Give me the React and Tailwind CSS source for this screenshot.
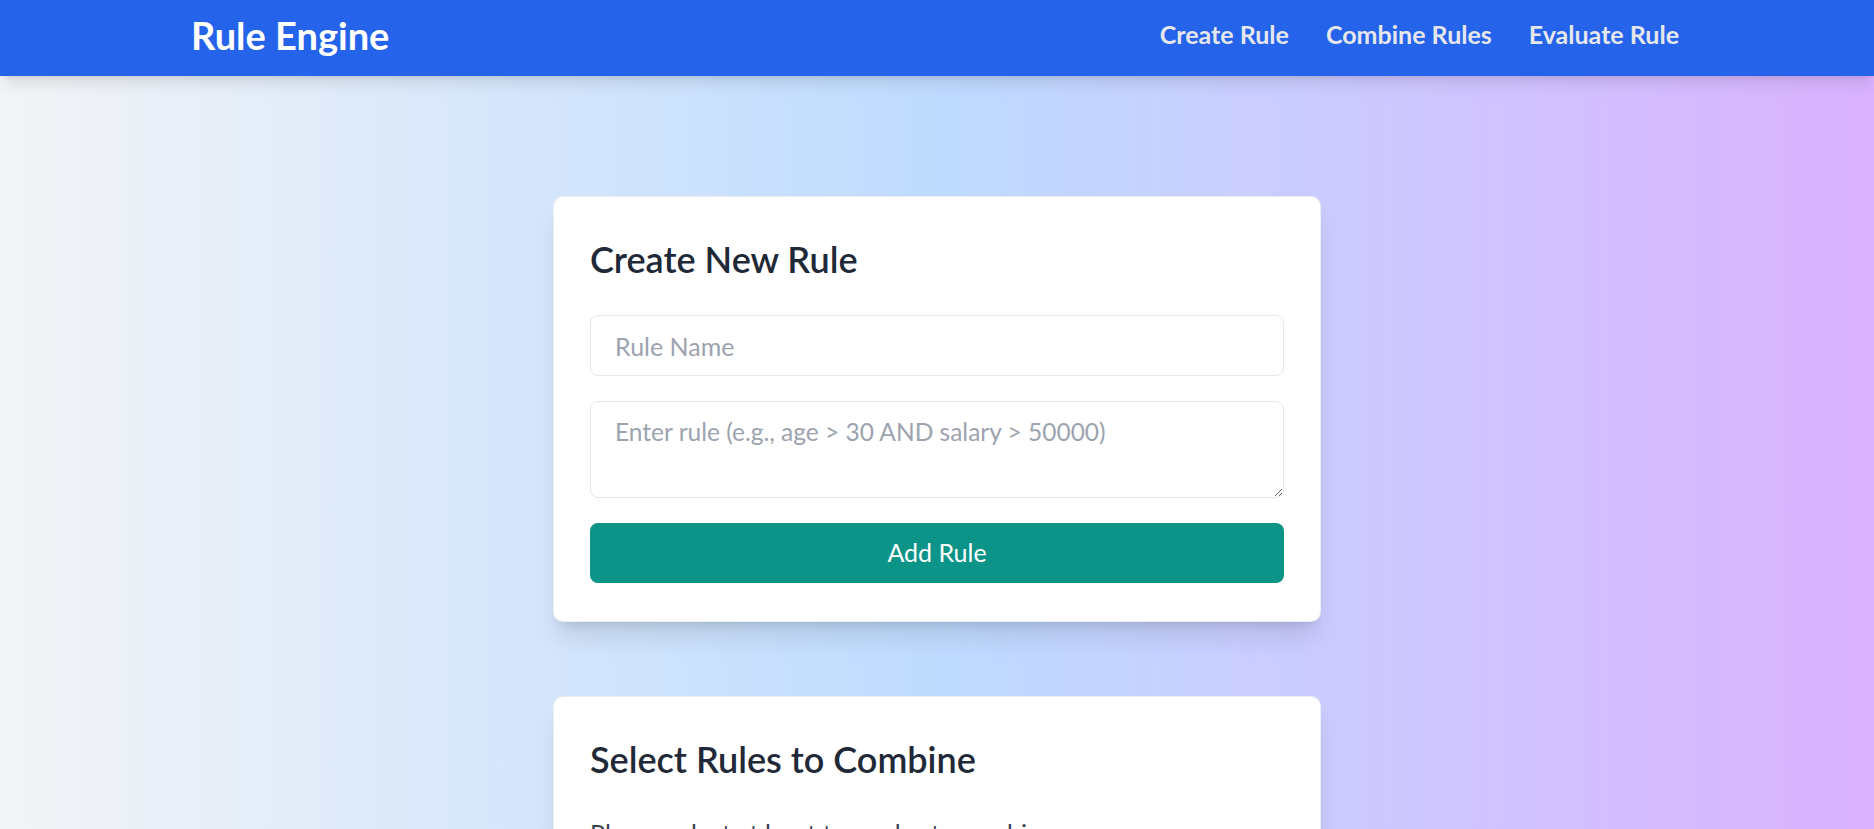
import React from "react";

export default function App() {
  return (
    <div
      className="min-h-screen bg-gradient-to-r from-gray-100 via-blue-200 to-purple-300"
      style={{ fontFamily: "Lato, 'Open Sans', sans-serif" }}
    >
      <header className="bg-[#2563eb] shadow-lg relative z-10">
        <div className="mx-auto max-w-[1536px] pl-[22px] pr-6 h-[76px] pb-[6px] flex items-center justify-between">
          <h1 className="text-white font-bold text-[38px] leading-none">Rule Engine</h1>
          <nav className="flex items-center gap-[37px] pr-[2px] -mt-[2px]">
            <a className="text-[#e5e7eb] font-bold text-[25px] leading-none">Create Rule</a>
            <a className="text-[#e5e7eb] font-bold text-[25px] leading-none">Combine Rules</a>
            <a className="text-[#e5e7eb] font-bold text-[25px] leading-none">Evaluate Rule</a>
          </nav>
        </div>
      </header>

      <main className="flex flex-col items-center pt-[120px] pb-[80px] gap-[74px]">
        <section className="w-[768px] bg-white rounded-[10px] shadow-xl border border-gray-200/70 px-[36px] pt-[40px] pb-[38px]">
          <h2 className="text-[#1f2937] font-semibold text-[36px] leading-[44px] mb-[34px]">Create New Rule</h2>
          <input
            type="text"
            placeholder="Rule Name"
            className="block w-full h-[61px] border border-[#e5e7eb] rounded-[8px] px-[24px] text-[25px] text-gray-800 placeholder:text-[#9ca3af] outline-none"
          />
          <textarea
            placeholder="Enter rule (e.g., age > 30 AND salary > 50000)"
            className="block w-full h-[97px] mt-[25px] border border-[#e5e7eb] rounded-[8px] px-[24px] py-[12px] text-[24.5px] leading-[36px] text-gray-800 placeholder:text-[#9ca3af] outline-none"
          />
          <button className="block w-full h-[60px] mt-[25px] bg-[#0d9488] text-white rounded-[8px] text-[25px]">
            Add Rule
          </button>
        </section>

        <section className="w-[768px] bg-white rounded-[10px] shadow-xl border border-gray-200/70 px-[36px] pt-[40px] pb-[38px]">
          <h2 className="text-[#1f2937] font-semibold text-[36px] leading-[44px] mb-[34px]">Select Rules to Combine</h2>
          <p className="text-[#374151] text-[25px] leading-[36px]">Please select at least two rules to combine.</p>
        </section>
      </main>
    </div>
  );
}
